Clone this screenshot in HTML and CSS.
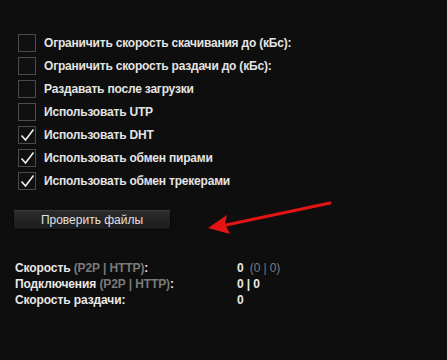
FILE: index.html
```html
<!DOCTYPE html>
<html lang="ru">
<head>
<meta charset="utf-8">
<link rel="stylesheet" href="styles.css">
</head>
<body>
<div class="panel">
  <ul class="options">
    <li class="option"><span class="box"></span><span class="label">Ограничить скорость скачивания до (кБс):</span></li>
    <li class="option"><span class="box"></span><span class="label">Ограничить скорость раздачи до (кБс):</span></li>
    <li class="option"><span class="box"></span><span class="label">Раздавать после загрузки</span></li>
    <li class="option"><span class="box"></span><span class="label">Использовать UTP</span></li>
    <li class="option"><span class="box checked"><svg viewBox="0 0 18 18" width="18" height="18"><path d="M3.5 9.5 L7.5 14 L15.5 3.5" fill="none" stroke="#f2f2f2" stroke-width="1.6" stroke-linejoin="miter"/></svg></span><span class="label">Использовать DHT</span></li>
    <li class="option"><span class="box checked"><svg viewBox="0 0 18 18" width="18" height="18"><path d="M3.5 9.5 L7.5 14 L15.5 3.5" fill="none" stroke="#f2f2f2" stroke-width="1.6" stroke-linejoin="miter"/></svg></span><span class="label">Использовать обмен пирами</span></li>
    <li class="option"><span class="box checked"><svg viewBox="0 0 18 18" width="18" height="18"><path d="M3.5 9.5 L7.5 14 L15.5 3.5" fill="none" stroke="#f2f2f2" stroke-width="1.6" stroke-linejoin="miter"/></svg></span><span class="label">Использовать обмен трекерами</span></li>
  </ul>
  <div class="actions">
    <button class="btn" type="button">Проверить файлы</button>
    <svg class="arrow" width="140" height="40" viewBox="0 0 140 40"><path d="M134 6 L30 28" stroke="#e31414" stroke-width="3.2" stroke-linecap="round"/><path d="M12 31 L31 18 L29 27 L34 37 Z" fill="#e31414"/></svg>
  </div>
  <div class="stats">
    <div class="stat-label">Скорость <span class="muted">(P2P | HTTP)</span>:</div><div class="stat-value">0 <span class="muted small">(0 | 0)</span></div>
    <div class="stat-label">Подключения <span class="muted">(P2P | HTTP)</span>:</div><div class="stat-value">0 | 0</div>
    <div class="stat-label">Скорость раздачи:</div><div class="stat-value">0</div>
  </div>
</div>
</body>
</html>
```
FILE: styles.css
```css
html, body {
  margin: 0;
  padding: 0;
  background: #0e0e0e;
}
body {
  width: 447px;
  height: 360px;
  overflow: hidden;
  font-family: "Liberation Sans", Arial, sans-serif;
  color: #e6e6e6;
}
.panel {
  padding: 34px 0 0 0;
}
.options {
  list-style: none;
  margin: 0;
  padding: 0 0 0 18px;
  display: flex;
  flex-direction: column;
  gap: 5px;
}
.option {
  display: flex;
  align-items: center;
  gap: 8px;
  height: 18px;
}
.box {
  width: 18px;
  height: 18px;
  box-sizing: border-box;
  border: 1px solid #4b4b4b;
  background: #101010;
  display: block;
  position: relative;
}
.box svg {
  position: absolute;
  left: -1px;
  top: -1px;
}
.label {
  font-size: 12px;
  font-weight: bold;
  letter-spacing: -0.2px;
  color: #e4e4e4;
  line-height: 18px;
}
.actions {
  position: relative;
  padding: 20px 0 0 13px;
  height: 20px;
}
.btn {
  display: block;
  width: 158px;
  height: 20px;
  margin: 0;
  padding: 0;
  border: 1px solid #050505;
  border-top-color: #3a3a3a;
  background: linear-gradient(#2c2c2c, #1b1b1b);
  color: #e0e0e0;
  font-family: "Liberation Sans", Arial, sans-serif;
  font-size: 12px;
  line-height: 18px;
  text-align: center;
}
.arrow {
  position: absolute;
  left: 196px;
  top: 7px;
}
.stats {
  display: grid;
  grid-template-columns: 222px auto;
  padding: 30px 0 0 15px;
  font-size: 12px;
  font-weight: bold;
  letter-spacing: -0.1px;
  line-height: 16px;
  color: #e8e8e8;
}
.muted {
  color: #7a7a7a;
}
.small {
  font-weight: normal;
  font-size: 12px;
  margin-left: 3px;
}
```
